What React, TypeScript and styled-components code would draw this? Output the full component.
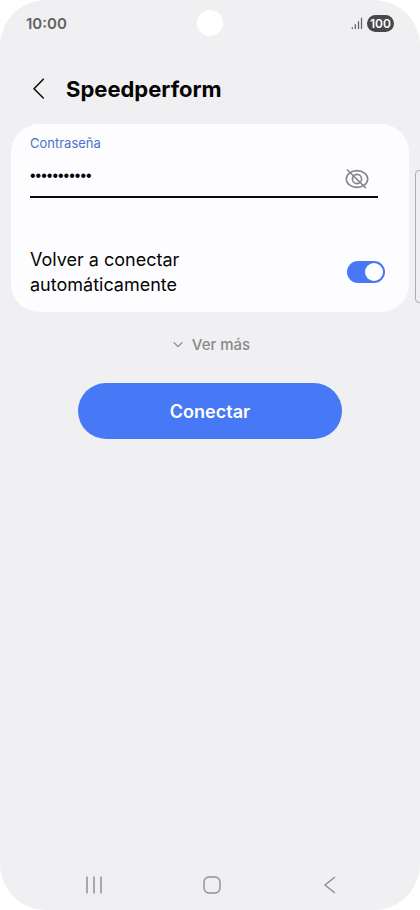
import React, { useState } from "react";
import styled, { createGlobalStyle } from "styled-components";

const GlobalStyle = createGlobalStyle`
  *, *::before, *::after { box-sizing: border-box; }
  html { background: #ffffff; }
  body { margin: 0; font-family: Inter, "Liberation Sans", sans-serif; color: #050505; }
  button { margin: 0; padding: 0; border: 0; background: none; font: inherit; cursor: pointer; }
  svg { display: block; }
`;

const Screen = styled.div`
  position: relative;
  display: flex;
  flex-direction: column;
  min-height: 100vh;
  overflow: hidden;
  background: #f0f0f2;
  border-radius: 46px;
`;

const StatusBar = styled.header`
  display: grid;
  grid-template-columns: 1fr 26px 1fr;
  align-items: center;
  height: 46px;
  padding: 0 26px;
`;

const Clock = styled.time`
  font-size: 15px;
  font-weight: 600;
  color: #626264;
`;

const Camera = styled.span`
  width: 26px;
  height: 26px;
  border-radius: 50%;
  background: #ffffff;
`;

const StatusIcons = styled.div`
  display: flex;
  justify-content: flex-end;
  align-items: center;
  gap: 4px;
`;

const Battery = styled.span`
  width: 27px;
  height: 17px;
  border-radius: 9px;
  background: #48484a;
  color: #ffffff;
  font-size: 12px;
  font-weight: 600;
  line-height: 17px;
  text-align: center;
`;

const TitleBar = styled.div`
  display: flex;
  align-items: center;
  gap: 20px;
  height: 78px;
  padding: 8px 32px 0;
`;

const Title = styled.h1`
  margin: 0;
  font-size: 22px;
  line-height: 28px;
  font-weight: 700;
`;

const Card = styled.form`
  margin: 0 11px;
  padding: 11px 24px 15px 19px;
  border-radius: 28px;
  background: #fdfdff;
`;

const Field = styled.div`
  margin-right: 7px;
  border-bottom: 2px solid #0a0a0a;
`;

const FieldLabel = styled.label`
  display: block;
  font-size: 13px;
  line-height: 16px;
  color: #4e72c8;
`;

const FieldRow = styled.div`
  display: flex;
  align-items: flex-end;
  height: 45px;
  padding: 0 8px 6px 0;
`;

const PasswordInput = styled.input`
  flex: 1;
  min-width: 0;
  height: 28px;
  padding: 0;
  border: 0;
  outline: 0;
  background: transparent;
  color: #050505;
  font-family: "Liberation Sans", Arial, sans-serif;
  font-size: 16px;
`;

const OptionRow = styled.div`
  display: flex;
  align-items: center;
  justify-content: space-between;
  margin-top: 49px;
`;

const OptionLabel = styled.label`
  width: 190px;
  font-size: 18px;
  line-height: 25px;
`;

const Switch = styled.input`
  appearance: none;
  display: flex;
  flex: none;
  align-items: center;
  width: 38px;
  height: 22px;
  margin: 0;
  padding: 2px;
  border-radius: 11px;
  background: #b4b4b8;
  cursor: pointer;

  &::before {
    content: "";
    width: 18px;
    height: 18px;
    border-radius: 50%;
    background: #ffffff;
  }
  &:checked {
    justify-content: flex-end;
    background: #4778f5;
  }
`;

const Actions = styled.div`
  display: flex;
  flex-direction: column;
  align-items: center;
  gap: 28px;
  padding-top: 23px;
`;

const MoreButton = styled.button`
  display: flex;
  align-items: center;
  gap: 8px;
  padding-left: 2px;
  font-size: 15px;
  font-weight: 500;
  line-height: 20px;
  color: #89898b;
`;

const ConnectButton = styled.button`
  width: 63%;
  height: 56px;
  border-radius: 28px;
  background: #4778f5;
  color: #ffffff;
  font-size: 18px;
  font-weight: 600;
`;

const EdgeHandle = styled.div`
  position: absolute;
  top: 170px;
  right: -3px;
  width: 8px;
  height: 133px;
  border: 1px solid #acacae;
  border-radius: 5px;
`;

const NavBar = styled.nav`
  display: flex;
  justify-content: space-between;
  margin-top: auto;
  padding: 0 76px 11px 80px;
`;

const NavButton = styled.button`
  display: grid;
  place-items: center;
  width: 28px;
  height: 28px;
`;

export default function App() {
  const [visible, setVisible] = useState(false);
  const [password, setPassword] = useState("contrasenas");
  const [reconnect, setReconnect] = useState(true);

  return (
    <Screen>
      <GlobalStyle />
      <StatusBar>
        <Clock>10:00</Clock>
        <Camera />
        <StatusIcons>
          <svg width="12" height="13" viewBox="0 0 12 13" stroke="#656567" strokeWidth="1.3" strokeLinecap="round">
            <path d="M1.3 10.7V11.5M4.3 7.7V11.5M7.5 4.7V11.5M10.5 1.2V11.5" />
          </svg>
          <Battery>100</Battery>
        </StatusIcons>
      </StatusBar>

      <TitleBar>
        <button type="button" aria-label="Atrás">
          <svg width="14" height="22" viewBox="0 0 14 22" fill="none" stroke="#111111" strokeWidth="1.6" strokeLinecap="round" strokeLinejoin="round">
            <path d="M11.3 1.2L2 10.7L11.3 20" />
          </svg>
        </button>
        <Title>Speedperform</Title>
      </TitleBar>

      <main>
        <Card onSubmit={(event) => event.preventDefault()}>
          <Field>
            <FieldLabel htmlFor="password">Contraseña</FieldLabel>
            <FieldRow>
              <PasswordInput
                id="password"
                type={visible ? "text" : "password"}
                value={password}
                onChange={(event) => setPassword(event.target.value)}
              />
              <button type="button" aria-label="Mostrar contraseña" onClick={() => setVisible(!visible)}>
                <svg width="26" height="22" viewBox="0 0 26 22" fill="none" stroke="#858587" strokeWidth="1.6" strokeLinecap="round">
                  <ellipse cx="13" cy="11" rx="10.7" ry="8.4" />
                  <circle cx="13" cy="11" r="4.6" />
                  <path d="M3.5 2L21.5 19.7" />
                </svg>
              </button>
            </FieldRow>
          </Field>
          <OptionRow>
            <OptionLabel htmlFor="reconnect">Volver a conectar automáticamente</OptionLabel>
            <Switch
              id="reconnect"
              type="checkbox"
              role="switch"
              checked={reconnect}
              onChange={(event) => setReconnect(event.target.checked)}
            />
          </OptionRow>
        </Card>

        <Actions>
          <MoreButton type="button">
            <svg width="12" height="8" viewBox="0 0 12 8" fill="none" stroke="#858587" strokeWidth="1.2" strokeLinecap="round" strokeLinejoin="round">
              <path d="M2 1.7L6 5.7L10 1.7" />
            </svg>
            Ver más
          </MoreButton>
          <ConnectButton type="button">Conectar</ConnectButton>
        </Actions>
      </main>

      <EdgeHandle />

      <NavBar>
        <NavButton type="button" aria-label="Recientes">
          <svg width="18" height="18" viewBox="0 0 18 18" stroke="#909092" strokeWidth="1.5">
            <path d="M2 .5V17.5M9 .5V17.5M16 .5V17.5" />
          </svg>
        </NavButton>
        <NavButton type="button" aria-label="Inicio">
          <svg width="18" height="18" viewBox="0 0 18 18" fill="none" stroke="#909092" strokeWidth="1.4">
            <rect x="1" y="1" width="16" height="16" rx="5" />
          </svg>
        </NavButton>
        <NavButton type="button" aria-label="Volver">
          <svg width="14" height="18" viewBox="0 0 14 18" fill="none" stroke="#909092" strokeWidth="1.5">
            <path d="M12 1L2 9L12 17" />
          </svg>
        </NavButton>
      </NavBar>
    </Screen>
  );
}
